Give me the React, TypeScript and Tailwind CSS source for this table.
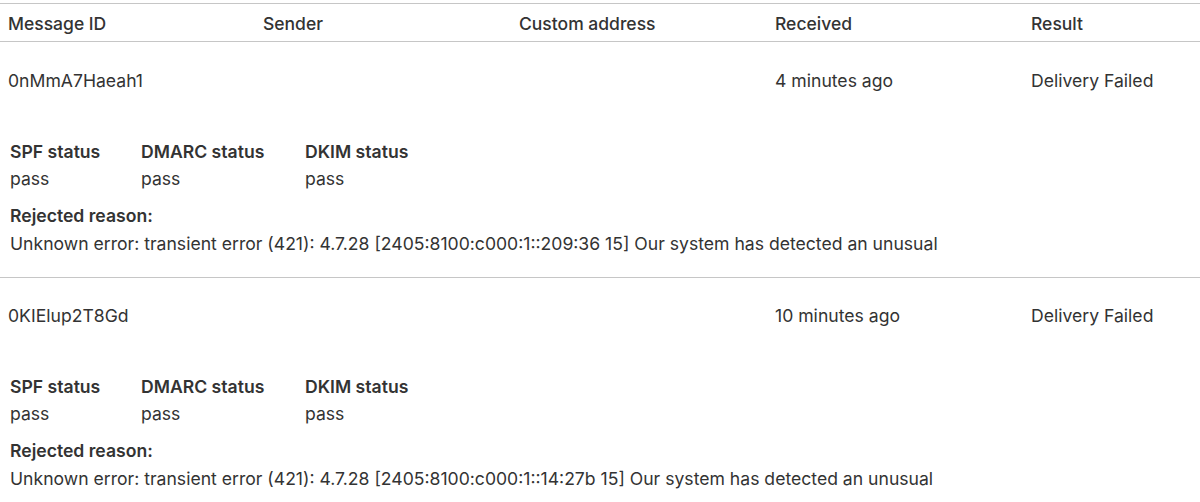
const rows = [
  {
    id: "0nMmA7Haeah1",
    received: "4 minutes ago",
    result: "Delivery Failed",
    reason:
      "Unknown error: transient error (421): 4.7.28 [2405:8100:c000:1::209:36 15] Our system has detected an unusual",
  },
  {
    id: "0KIElup2T8Gd",
    received: "10 minutes ago",
    result: "Delivery Failed",
    reason:
      "Unknown error: transient error (421): 4.7.28 [2405:8100:c000:1::14:27b 15] Our system has detected an unusual",
  },
];

const cols = "grid grid-cols-[255px_256px_256px_256px_256px]";

const App = () => {
  return (
    <div
      className="w-[1200px] h-[502px] overflow-hidden bg-white text-[#333] pt-[3px]"
      style={{ fontFamily: "Inter, 'Noto Sans', sans-serif" }}
    >
      {/* header */}
      <div className={`${cols} border-y-[1.5px] border-[#c6c6c6] w-[1280px] text-[17.5px] font-medium leading-[21px]`}>
        <div className="px-2 pt-[9px] pb-[7px]">Message ID</div>
        <div className="px-2 pt-[9px] pb-[7px]">Sender</div>
        <div className="px-2 pt-[9px] pb-[7px]">Custom address</div>
        <div className="px-2 pt-[9px] pb-[7px]">Received</div>
        <div className="px-2 pt-[9px] pb-[7px]">Result</div>
      </div>

      {rows.map((r, i) => (
        <div key={r.id} className="border-b-[1.5px] border-[#c6c6c6] w-[1280px] text-[17.6px]">
          <div className={`${cols} ${i === 0 ? "pt-[28px] h-[50px]" : "pt-[27px] h-[49px]"} leading-[22px]`}>
            <div className="px-2">{r.id}</div>
            <div className="px-2"></div>
            <div className="px-2"></div>
            <div className="px-2">{r.received}</div>
            <div className="px-2">{r.result}</div>
          </div>

          <div className="px-[10px] pt-[49px] h-[185px]">
            <div className="flex">
              <div className="w-[131px]">
                <div className="font-semibold h-[27px] leading-[22px]">SPF status</div>
                <div className="h-[22px] leading-[22px]">pass</div>
              </div>
              <div className="w-[164px]">
                <div className="font-semibold h-[27px] leading-[22px]">DMARC status</div>
                <div className="h-[22px] leading-[22px]">pass</div>
              </div>
              <div>
                <div className="font-semibold h-[27px] leading-[22px]">DKIM status</div>
                <div className="h-[22px] leading-[22px]">pass</div>
              </div>
            </div>
            <div className="mt-[15px] h-[28px] font-semibold leading-[22px]">Rejected reason:</div>
            <div className="leading-[22px]">{r.reason}</div>
          </div>
        </div>
      ))}
    </div>
  );
};

export default App;
